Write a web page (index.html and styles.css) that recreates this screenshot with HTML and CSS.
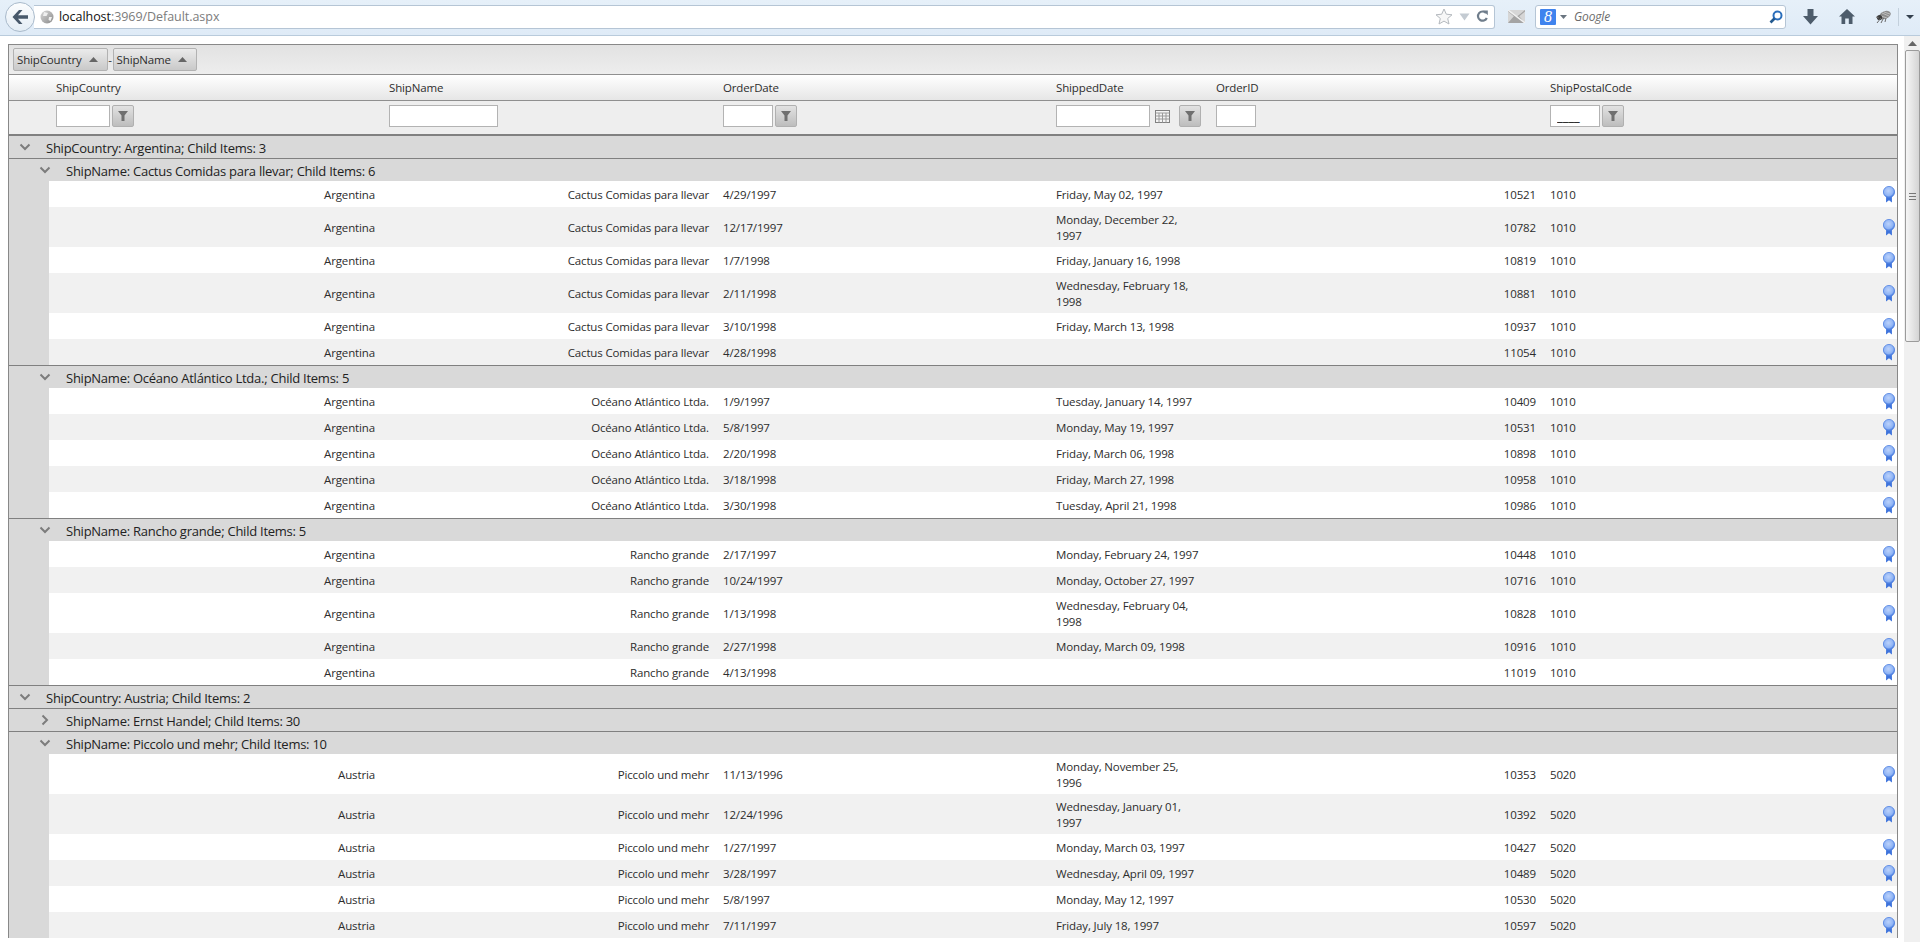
FILE: index.html
```html
<!DOCTYPE html>
<html lang="en">
<head>
<meta charset="utf-8">
<title>localhost:3969/Default.aspx</title>
<link rel="stylesheet" href="styles.css">
</head>
<body>
<svg class="defs" width="0" height="0" aria-hidden="true">
  <defs>
    <radialGradient id="medal" cx="45%" cy="40%" r="60%"><stop offset="0" stop-color="#bcd2fb"/><stop offset=".7" stop-color="#8fb4f5"/><stop offset="1" stop-color="#3f74dc"/></radialGradient>
    <linearGradient id="globe" x1="0" y1="0" x2="1" y2="1"><stop offset="0" stop-color="#d8d8d8"/><stop offset="1" stop-color="#8a8a8a"/></linearGradient>
    <symbol id="ribbon" viewBox="0 0 12 17"><path d="M3.200 9 L3 16.500 L6 14.200 L9 16.500 L8.800 9 Z" fill="#3f74dc"/><circle cx="6" cy="6" r="5.600" fill="url(#medal)" stroke="#4f82e2" stroke-width=".8"/></symbol>
    <symbol id="down" viewBox="0 0 12 8"><path d="M1.500 1.500 L6 6 L10.500 1.500" fill="none" stroke="#7c7c7c" stroke-width="2"/></symbol>
    <symbol id="right" viewBox="0 0 8 12"><path d="M1.500 1.500 L6 6 L1.500 10.500" fill="none" stroke="#7c7c7c" stroke-width="2"/></symbol>
    <symbol id="funnel" viewBox="0 0 12 12"><path d="M1 1 H11 L7.500 5.500 V11 H4.500 V5.500 Z" fill="#6f6f6f"/></symbol>
    <symbol id="caret" viewBox="0 0 9 5"><path d="M4.500 0 L9 5 H0 Z" fill="#666"/></symbol>
  </defs>
</svg>

<header class="browser-bar">
  <button class="back-btn" aria-label="Back">
    <svg width="18" height="16" viewBox="0 0 18 16"><path d="M8 1 L1.500 8 L8 15 H11.500 L7 9.800 H17 V6.200 H7 L11.500 1 Z" fill="#48596b"/></svg>
  </button>
  <div class="url-bar">
    <svg class="globe" width="14" height="14" viewBox="0 0 14 14"><circle cx="7" cy="7" r="6.500" fill="url(#globe)"/><path d="M4 2 L8 3 L6.500 6 L3 6 Z M9 7 L12 7 L10.500 11 L8.500 10 Z" fill="#efefef"/></svg>
    <span class="url-host">localhost</span><span class="url-rest">:3969/Default.aspx</span>
    <span class="url-actions">
      <svg width="18" height="17" viewBox="0 0 18 17"><path d="M9 1 L11.300 6.200 L17 6.800 L12.700 10.500 L14 16 L9 13.100 L4 16 L5.300 10.500 L1 6.800 L6.700 6.200 Z" fill="#f7f7f7" stroke="#b4b9be"/></svg>
      <svg width="11" height="8" viewBox="0 0 11 8"><path d="M0.500 0.500 H10.500 L5.500 7.500 Z" fill="#c4cbd2"/></svg>
      <svg width="12" height="13" viewBox="0 0 12 13"><path d="M10 3 A4.600 4.600 0 1 0 10.800 8" fill="none" stroke="#6f7d8b" stroke-width="2.200"/><path d="M7 0.500 H11.800 V5.300 Z" fill="#6f7d8b"/></svg>
    </span>
  </div>
  <svg class="mail" width="17" height="13" viewBox="0 0 17 13"><rect width="17" height="13" fill="#d6d6d6"/><path d="M0 0 L8.500 7 L17 0 V1.500 L8.500 8.500 L0 1.500 Z M0 13 L6 6 L11 6 L17 13 Z" fill="#a4a4a4"/><path d="M0 0 L17 13" stroke="#f1f1f1" stroke-width="1.400"/></svg>
  <div class="search-bar">
    <span class="g-badge">8</span>
    <svg width="7" height="4" viewBox="0 0 7 4"><path d="M0 0 H7 L3.500 4 Z" fill="#6a7580"/></svg>
    <span class="search-text">Google</span>
    <svg class="loupe" width="14" height="14" viewBox="0 0 14 14"><circle cx="8.500" cy="5.500" r="4" fill="none" stroke="#2a6ebb" stroke-width="2"/><path d="M5.500 8.500 L1.500 12.500" stroke="#22598f" stroke-width="2.600"/></svg>
  </div>
  <svg class="tool-ic dl" width="15" height="16" viewBox="0 0 15 16"><path d="M4.500 0 H10.500 V7 H15 L7.500 15.500 L0 7 H4.500 Z" fill="#4d5c6b"/></svg>
  <svg class="tool-ic home" width="16" height="15" viewBox="0 0 16 15"><path d="M8 0 L16 7.500 H13.500 V15 H9.800 V9.500 H6.200 V15 H2.500 V7.500 H0 Z" fill="#4d5c6b"/></svg>
  <svg class="tool-ic bug" width="17" height="14" viewBox="0 0 17 14"><ellipse cx="10" cy="5" rx="6" ry="3.800" fill="#8d8d8d" transform="rotate(-20 10 5)"/><path d="M7 3 L14 6 M9 2 L15 4 M6 6 L12 8" stroke="#c9c9c9" stroke-width=".8"/><circle cx="4.500" cy="7.500" r="2.600" fill="#3c3c3c"/><path d="M2 13 L6 8 M6 13 L8.500 8 M10 12 L11 8 M1 7 L4 8" stroke="#6a6a6a"/></svg>
  <span class="tool-sep"></span>
  <svg class="menu-caret" width="8" height="4" viewBox="0 0 8 4"><path d="M0 0 H8 L4 4 Z" fill="#33404d"/></svg>
</header>

<div class="viewport">
  <main class="grid">
    <div class="group-panel">
      <span class="group-chip">ShipCountry <svg class="caret" width="9" height="5"><use href="#caret"/></svg></span>
      <span class="chip-sep">-</span>
      <span class="group-chip">ShipName <svg class="caret" width="9" height="5"><use href="#caret"/></svg></span>
    </div>

    <div class="cols head-row">
      <div class="cell">ShipCountry</div><div class="cell">ShipName</div><div class="cell">OrderDate</div><div class="cell">ShippedDate</div><div class="cell">OrderID</div><div class="cell">ShipPostalCode</div><div></div>
    </div>

    <div class="cols filter-row">
      <div class="cell filter"><input class="f-input w54"><button class="f-btn" aria-label="Filter"><svg width="12" height="12"><use href="#funnel"/></svg></button></div>
      <div class="cell filter"><input class="f-input w109"></div>
      <div class="cell filter"><input class="f-input w50"><button class="f-btn" aria-label="Filter"><svg width="12" height="12"><use href="#funnel"/></svg></button></div>
      <div class="cell filter"><input class="f-input w94">
        <svg class="cal" width="15" height="13" viewBox="0 0 15 13"><rect x=".5" y=".5" width="14" height="12" fill="#f4f4f4" stroke="#808080"/><path d="M.5 3 H14.500 M.5 6 H14.500 M.5 9 H14.500 M4 3 V12.500 M7.500 3 V12.500 M11 3 V12.500" stroke="#9a9a9a" fill="none"/></svg>
        <button class="f-btn" aria-label="Filter"><svg width="12" height="12"><use href="#funnel"/></svg></button></div>
      <div class="cell filter"><input class="f-input w40"></div>
      <div class="cell filter"><input class="f-input w50 mask" value="____"><button class="f-btn" aria-label="Filter"><svg width="12" height="12"><use href="#funnel"/></svg></button></div>
      <div></div>
    </div>

    <section class="group">
      <h2 class="group-title lvl1"><svg class="chev" width="12" height="8"><use href="#down"/></svg><span>ShipCountry: Argentina; Child Items: 3</span></h2>
      <section class="sub">
        <h3 class="group-title lvl2"><svg class="chev" width="12" height="8"><use href="#down"/></svg><span>ShipName: Cactus Comidas para llevar; Child Items: 6</span></h3>
        <div class="rows">
          <div class="cols row"><div class="cell r">Argentina</div><div class="cell r">Cactus Comidas para llevar</div><div class="cell">4/29/1997</div><div class="cell">Friday, May 02, 1997</div><div class="cell r">10521</div><div class="cell">1010</div><div class="act"><svg width="12" height="17"><use href="#ribbon"/></svg></div></div>
          <div class="cols row tall"><div class="cell r">Argentina</div><div class="cell r">Cactus Comidas para llevar</div><div class="cell">12/17/1997</div><div class="cell">Monday, December 22,<br>1997</div><div class="cell r">10782</div><div class="cell">1010</div><div class="act"><svg width="12" height="17"><use href="#ribbon"/></svg></div></div>
          <div class="cols row"><div class="cell r">Argentina</div><div class="cell r">Cactus Comidas para llevar</div><div class="cell">1/7/1998</div><div class="cell">Friday, January 16, 1998</div><div class="cell r">10819</div><div class="cell">1010</div><div class="act"><svg width="12" height="17"><use href="#ribbon"/></svg></div></div>
          <div class="cols row tall"><div class="cell r">Argentina</div><div class="cell r">Cactus Comidas para llevar</div><div class="cell">2/11/1998</div><div class="cell">Wednesday, February 18,<br>1998</div><div class="cell r">10881</div><div class="cell">1010</div><div class="act"><svg width="12" height="17"><use href="#ribbon"/></svg></div></div>
          <div class="cols row"><div class="cell r">Argentina</div><div class="cell r">Cactus Comidas para llevar</div><div class="cell">3/10/1998</div><div class="cell">Friday, March 13, 1998</div><div class="cell r">10937</div><div class="cell">1010</div><div class="act"><svg width="12" height="17"><use href="#ribbon"/></svg></div></div>
          <div class="cols row"><div class="cell r">Argentina</div><div class="cell r">Cactus Comidas para llevar</div><div class="cell">4/28/1998</div><div class="cell"></div><div class="cell r">11054</div><div class="cell">1010</div><div class="act"><svg width="12" height="17"><use href="#ribbon"/></svg></div></div>
        </div>
      </section>
      <section class="sub">
        <h3 class="group-title lvl2"><svg class="chev" width="12" height="8"><use href="#down"/></svg><span>ShipName: Océano Atlántico Ltda.; Child Items: 5</span></h3>
        <div class="rows">
          <div class="cols row"><div class="cell r">Argentina</div><div class="cell r">Océano Atlántico Ltda.</div><div class="cell">1/9/1997</div><div class="cell">Tuesday, January 14, 1997</div><div class="cell r">10409</div><div class="cell">1010</div><div class="act"><svg width="12" height="17"><use href="#ribbon"/></svg></div></div>
          <div class="cols row"><div class="cell r">Argentina</div><div class="cell r">Océano Atlántico Ltda.</div><div class="cell">5/8/1997</div><div class="cell">Monday, May 19, 1997</div><div class="cell r">10531</div><div class="cell">1010</div><div class="act"><svg width="12" height="17"><use href="#ribbon"/></svg></div></div>
          <div class="cols row"><div class="cell r">Argentina</div><div class="cell r">Océano Atlántico Ltda.</div><div class="cell">2/20/1998</div><div class="cell">Friday, March 06, 1998</div><div class="cell r">10898</div><div class="cell">1010</div><div class="act"><svg width="12" height="17"><use href="#ribbon"/></svg></div></div>
          <div class="cols row"><div class="cell r">Argentina</div><div class="cell r">Océano Atlántico Ltda.</div><div class="cell">3/18/1998</div><div class="cell">Friday, March 27, 1998</div><div class="cell r">10958</div><div class="cell">1010</div><div class="act"><svg width="12" height="17"><use href="#ribbon"/></svg></div></div>
          <div class="cols row"><div class="cell r">Argentina</div><div class="cell r">Océano Atlántico Ltda.</div><div class="cell">3/30/1998</div><div class="cell">Tuesday, April 21, 1998</div><div class="cell r">10986</div><div class="cell">1010</div><div class="act"><svg width="12" height="17"><use href="#ribbon"/></svg></div></div>
        </div>
      </section>
      <section class="sub">
        <h3 class="group-title lvl2"><svg class="chev" width="12" height="8"><use href="#down"/></svg><span>ShipName: Rancho grande; Child Items: 5</span></h3>
        <div class="rows">
          <div class="cols row"><div class="cell r">Argentina</div><div class="cell r">Rancho grande</div><div class="cell">2/17/1997</div><div class="cell">Monday, February 24, 1997</div><div class="cell r">10448</div><div class="cell">1010</div><div class="act"><svg width="12" height="17"><use href="#ribbon"/></svg></div></div>
          <div class="cols row"><div class="cell r">Argentina</div><div class="cell r">Rancho grande</div><div class="cell">10/24/1997</div><div class="cell">Monday, October 27, 1997</div><div class="cell r">10716</div><div class="cell">1010</div><div class="act"><svg width="12" height="17"><use href="#ribbon"/></svg></div></div>
          <div class="cols row tall"><div class="cell r">Argentina</div><div class="cell r">Rancho grande</div><div class="cell">1/13/1998</div><div class="cell">Wednesday, February 04,<br>1998</div><div class="cell r">10828</div><div class="cell">1010</div><div class="act"><svg width="12" height="17"><use href="#ribbon"/></svg></div></div>
          <div class="cols row"><div class="cell r">Argentina</div><div class="cell r">Rancho grande</div><div class="cell">2/27/1998</div><div class="cell">Monday, March 09, 1998</div><div class="cell r">10916</div><div class="cell">1010</div><div class="act"><svg width="12" height="17"><use href="#ribbon"/></svg></div></div>
          <div class="cols row"><div class="cell r">Argentina</div><div class="cell r">Rancho grande</div><div class="cell">4/13/1998</div><div class="cell"></div><div class="cell r">11019</div><div class="cell">1010</div><div class="act"><svg width="12" height="17"><use href="#ribbon"/></svg></div></div>
        </div>
      </section>
    </section>

    <section class="group">
      <h2 class="group-title lvl1"><svg class="chev" width="12" height="8"><use href="#down"/></svg><span>ShipCountry: Austria; Child Items: 2</span></h2>
      <section class="sub">
        <h3 class="group-title lvl2"><svg class="chev" width="12" height="12"><use href="#right"/></svg><span>ShipName: Ernst Handel; Child Items: 30</span></h3>
      </section>
      <section class="sub">
        <h3 class="group-title lvl2"><svg class="chev" width="12" height="8"><use href="#down"/></svg><span>ShipName: Piccolo und mehr; Child Items: 10</span></h3>
        <div class="rows">
          <div class="cols row tall"><div class="cell r">Austria</div><div class="cell r">Piccolo und mehr</div><div class="cell">11/13/1996</div><div class="cell">Monday, November 25,<br>1996</div><div class="cell r">10353</div><div class="cell">5020</div><div class="act"><svg width="12" height="17"><use href="#ribbon"/></svg></div></div>
          <div class="cols row tall"><div class="cell r">Austria</div><div class="cell r">Piccolo und mehr</div><div class="cell">12/24/1996</div><div class="cell">Wednesday, January 01,<br>1997</div><div class="cell r">10392</div><div class="cell">5020</div><div class="act"><svg width="12" height="17"><use href="#ribbon"/></svg></div></div>
          <div class="cols row"><div class="cell r">Austria</div><div class="cell r">Piccolo und mehr</div><div class="cell">1/27/1997</div><div class="cell">Monday, March 03, 1997</div><div class="cell r">10427</div><div class="cell">5020</div><div class="act"><svg width="12" height="17"><use href="#ribbon"/></svg></div></div>
          <div class="cols row"><div class="cell r">Austria</div><div class="cell r">Piccolo und mehr</div><div class="cell">3/28/1997</div><div class="cell">Wednesday, April 09, 1997</div><div class="cell r">10489</div><div class="cell">5020</div><div class="act"><svg width="12" height="17"><use href="#ribbon"/></svg></div></div>
          <div class="cols row"><div class="cell r">Austria</div><div class="cell r">Piccolo und mehr</div><div class="cell">5/8/1997</div><div class="cell">Monday, May 12, 1997</div><div class="cell r">10530</div><div class="cell">5020</div><div class="act"><svg width="12" height="17"><use href="#ribbon"/></svg></div></div>
          <div class="cols row"><div class="cell r">Austria</div><div class="cell r">Piccolo und mehr</div><div class="cell">7/11/1997</div><div class="cell">Friday, July 18, 1997</div><div class="cell r">10597</div><div class="cell">5020</div><div class="act"><svg width="12" height="17"><use href="#ribbon"/></svg></div></div>
        </div>
      </section>
    </section>
  </main>

  <aside class="scrollbar" aria-hidden="true">
    <svg class="sb-arrow" width="9" height="5"><use href="#caret"/></svg>
    <div class="sb-thumb"><span class="sb-grip"></span></div>
  </aside>
</div>
</body>
</html>
```

FILE: styles.css
```css
* { box-sizing: border-box; }
html, body { height: 100%; margin: 0; }
body {
  display: flex;
  flex-direction: column;
  overflow: hidden;
  background: #fff;
  color: #2d2d2d;
  font: 11.5px/16px "Open Sans", "Liberation Sans", sans-serif;
  letter-spacing: -0.14px;
}
.defs { position: absolute; }

/* Browser chrome */
.browser-bar {
  flex: 0 0 36px;
  display: flex;
  align-items: center;
  height: 36px;
  padding: 0 0 2px 5px;
  background: linear-gradient(#e6f0f9, #dfebf7);
  border-bottom: 1px solid #b9cbdc;
  position: relative;
}
.back-btn {
  flex: 0 0 30px;
  width: 30px;
  height: 30px;
  padding: 0;
  display: flex;
  align-items: center;
  justify-content: center;
  border: 1px solid #a9bacb;
  border-radius: 50%;
  background: linear-gradient(#fcfdfe, #e4edf5);
  position: relative;
  z-index: 1;
}
.url-bar {
  flex: 0 0 1461px;
  margin-left: -1px;
  height: 24px;
  display: flex;
  align-items: center;
  padding-left: 6px;
  background: #fff;
  border: 1px solid #b5c5d5;
  border-left: 0;
  border-radius: 0 3px 3px 0;
  font-size: 12.500px;
  letter-spacing: -0.05px;
}
.globe { margin-right: 5px; }
.url-host { color: #111; }
.url-rest { color: #7c7c7c; }
.url-actions {
  margin-left: auto;
  display: flex;
  align-items: center;
  gap: 6px;
  padding-right: 6px;
}
.mail { margin-left: 13px; flex: none; }
.search-bar {
  flex: 0 0 251px;
  margin-left: 10px;
  height: 24px;
  display: flex;
  align-items: center;
  gap: 4px;
  padding: 0 2px 0 4px;
  background: #fff;
  border: 1px solid #b5c5d5;
  border-radius: 3px;
}
.g-badge {
  width: 16px;
  height: 16px;
  background: #3f83ee;
  color: #fff;
  border-radius: 1px;
  text-align: center;
  font: italic 16px/16px "Liberation Serif", serif;
}
.search-text {
  margin-left: 3px;
  color: #6c6c6c;
  font-style: italic;
  font-size: 12px;
}
.loupe { margin-left: auto; }
.tool-ic { flex: none; }
.dl { margin-left: 17px; }
.home { margin-left: 21px; }
.bug { margin-left: 20px; }
.tool-sep { width: 1px; height: 18px; background: #c3d0dc; margin-left: 6px; }
.menu-caret { margin-left: 7px; }

/* Page */
.viewport {
  flex: 1;
  min-height: 0;
  display: flex;
  justify-content: space-between;
  overflow: hidden;
  padding: 8px 0 0 8px;
}
.grid {
  flex: 0 0 1890px;
  border: 1px solid #888;
  border-bottom: 0;
  align-self: flex-start;
}
.group-panel {
  height: 30px;
  display: flex;
  align-items: flex-start;
  padding: 3px 0 0 4px;
  background: linear-gradient(#e2e2e2, #ededed);
  border-bottom: 1px solid #8f8f8f;
}
.group-chip {
  height: 23px;
  display: flex;
  align-items: center;
  padding: 0 9px 0 3px;
  gap: 7px;
  background: linear-gradient(#ebebeb, #c9c9c9);
  border: 1px solid #b2b2b2;
  border-radius: 2px;
}
.chip-sep { width: 5px; line-height: 23px; text-align: center; }
.caret { flex: none; }

.cols {
  display: grid;
  grid-template-columns: 333px 334px 333px 160px 334px 1fr 20px;
  padding-left: 40px;
}
.cell { padding: 0 7px; min-width: 0; }
.head-row {
  height: 26px;
  align-items: center;
  background: linear-gradient(#fff, #e6e6e6);
  border-bottom: 1px solid #8f8f8f;
}
.filter-row {
  height: 35px;
  background: #eeeeee;
  border-bottom: 2px solid #808080;
}
.filter {
  display: flex;
  align-items: flex-start;
  padding-top: 4px;
  white-space: nowrap;
}
.f-input {
  height: 22px;
  padding: 0 0 0 6px;
  border: 1px solid #b3b3b3;
  background: #fff;
  font: 12px/14px "Open Sans", sans-serif;
  color: #000;
}
.mask { font-size: 13px; }
.w40 { width: 40px; }
.w50 { width: 50px; }
.w54 { width: 54px; }
.w94 { width: 94px; }
.w109 { width: 109px; }
.f-btn {
  width: 22px;
  height: 22px;
  margin-left: 2px;
  padding: 0;
  display: flex;
  align-items: center;
  justify-content: center;
  background: linear-gradient(#e2e2e2, #bdbdbd);
  border: 1px solid #b0b0b0;
  border-radius: 2px;
}
.cal { margin: 5px 7px 0 5px; flex: none; }

/* Groups */
.group-title {
  height: 22px;
  margin: 0;
  display: flex;
  align-items: center;
  background: #d9d9d9;
  color: #222;
  font-size: 13px;
  font-weight: 400;
  letter-spacing: -0.25px;
}
.group-title span { padding: 1px 0 0 1px; }
.lvl1 { padding-left: 10px; height: 23px; border-bottom: 1px solid #808080; }
.lvl2 { padding-left: 30px; }
.chev { flex: none; margin-right: 14px; }
.sub { border-bottom: 1px solid #808080; }
.group:last-child .sub:last-child { border-bottom: 0; }
.rows {
  border-left: 40px solid #d9d9d9;
}
.rows .cols { padding-left: 0; }
.row {
  height: 26px;
  align-items: center;
}
.row .cell { padding-top: 1px; }
.tall { height: 40px; }
.row:nth-child(even) { background: #f1f1f1; }
.r { text-align: right; }
.act { display: flex; justify-content: flex-end; padding-right: 2px; }

/* Scrollbar */
.scrollbar {
  flex: 0 0 16px;
  margin-top: -8px;
  padding-top: 5px;
  display: flex;
  flex-direction: column;
  align-items: center;
  background: #f0f0f0;
  height: 906px;
}
.sb-arrow { flex: none; }
.sb-thumb {
  margin-top: 4px;
  width: 15px;
  height: 292px;
  display: flex;
  align-items: center;
  justify-content: center;
  background: linear-gradient(90deg, #f6f6f6, #d4d4d4);
  border: 1px solid #9b9b9b;
  border-radius: 2px;
}
.sb-grip {
  width: 7px;
  height: 7px;
  border-top: 1px solid #777;
  border-bottom: 1px solid #777;
  background: linear-gradient(#777, #777) center / 100% 1px no-repeat;
}
```
